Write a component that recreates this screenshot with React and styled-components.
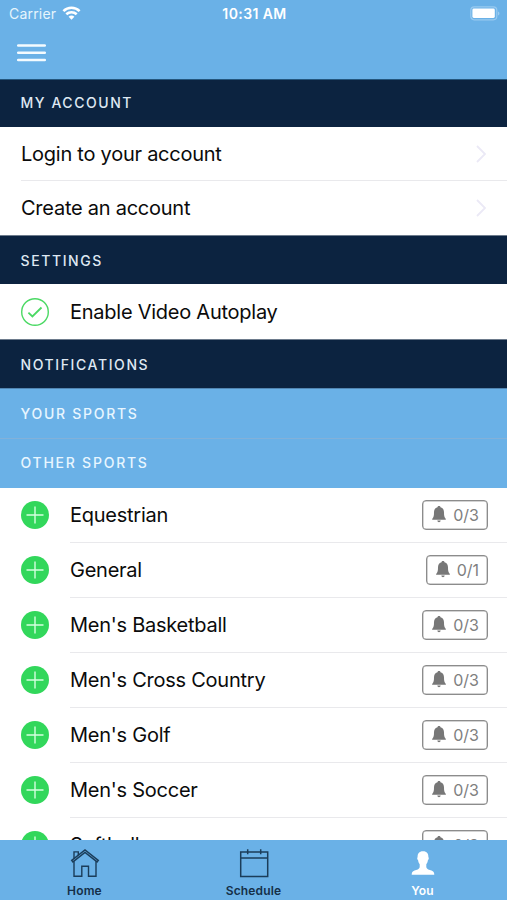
import React from 'react'
import styled, { createGlobalStyle } from 'styled-components';

const GlobalStyle = createGlobalStyle`
  body {
    margin: 0;
    background: #ffffff;
    font-family: Inter, "Liberation Sans", sans-serif;
  }
  * {
    box-sizing: border-box;
  }
`;

const Screen = styled.div`
  display: flex;
  flex-direction: column;
  width: 507px;
  height: 900px;
  overflow: hidden;
  background: #ffffff;
`;
const Header = styled.header`
  flex: none;
  height: 79px;
  background: #6ab1e7;
  color: #ffffff;
`;
const StatusBar = styled.div`
  display: grid;
  grid-template-columns: 1fr auto 1fr;
  align-items: center;
  height: 27px;
  padding: 0 7px 0 9px;
`;
const Carrier = styled.div`
  display: flex;
  align-items: center;
  gap: 6px;
  font-size: 14px;
  line-height: 27px;
  letter-spacing: 0.2px;
  color: #e6f5fc;
`;
const Clock = styled.div`
  font-size: 14px;
  font-weight: 600;
  line-height: 27px;
  letter-spacing: 0.4px;
`;
const BatteryIcon = styled.svg`
  justify-self: end;
`;
const MenuButton = styled.button`
  display: flex;
  flex-direction: column;
  margin: 17px 0 0 17px;
  padding: 0;
  border: none;
  background: none;
`;
const Content = styled.main`
  flex: 1;
  min-height: 0;
  overflow: hidden;
`;
const SectionTitle = styled.h2`
  height: ${(props) => props.$height}px;
  margin: 0;
  padding-left: 20.5px;
  border-top: 1px solid ${(props) => props.$line || 'transparent'};
  background: ${(props) => (props.$light ? '#6ab1e7' : '#0c2340')};
  color: ${(props) => (props.$light ? '#e8f6ff' : '#dfe8f2')};
  font-size: 14px;
  font-weight: 500;
  line-height: ${(props) => props.$lineHeight || props.$height - 1}px;
  letter-spacing: ${(props) => props.$spacing}px;
`;
const Row = styled.div`
  display: flex;
  align-items: center;
  height: ${(props) => props.$height}px;
  padding-left: 21px;
`;
const RowBody = styled.div`
  display: flex;
  flex: 1;
  align-items: center;
  justify-content: space-between;
  height: 100%;
  margin-left: ${(props) => (props.$inset ? 21 : 0)}px;
  padding-top: ${(props) => props.$top || 0}px;
  padding-right: 19px;
  border-bottom: ${(props) => (props.$last ? 'none' : '1px solid #e9e9ec')};
`;
const Label = styled.span`
  font-size: 20px;
  line-height: 28px;
  letter-spacing: -0.25px;
  color: #0b0b0b;
`;
const Badge = styled.div`
  display: flex;
  align-items: center;
  gap: 6px;
  height: 30px;
  padding: 0 8px;
  border: 1px solid #8c8c8c;
  border-radius: 4px;
  box-shadow: inset 0 0 0 0.5px #a8a8a8;
  color: #808080;
  font-size: 16px;
  line-height: 28px;
`;
const TabBar = styled.nav`
  display: grid;
  grid-template-columns: repeat(3, 1fr);
  flex: none;
  height: 60px;
  background: #6ab1e7;
`;
const Tab = styled.div`
  display: flex;
  flex-direction: column;
  align-items: center;
  padding-top: 8px;
  color: ${(props) => (props.$active ? '#ffffff' : '#152f48')};
`;
const TabLabel = styled.span`
  margin-top: 5px;
  font-size: 12px;
  font-weight: 600;
  line-height: 16px;
  letter-spacing: 0.15px;
`;

const WifiIcon = () => (
  <svg width="19" height="15" viewBox="0 0 19 15" fill="none" stroke="#fff" strokeWidth="2.6">
    <path d="M1.4 5.1C6 .6 13 .6 17.6 5.1" />
    <path d="M4.3 8.3c3-2.8 7.4-2.8 10.4 0" />
    <path d="M6.6 10.7c1.7-1.5 4.1-1.5 5.8 0L9.5 13.8z" fill="#fff" stroke="none" />
  </svg>
);

const Battery = () => (
  <BatteryIcon width="30" height="15" viewBox="0 0 30 15">
    <rect x="0.8" y="0.8" width="26" height="13" rx="3.5" fill="none" stroke="#98caf0" strokeWidth="1.2" />
    <rect x="2.4" y="2.6" width="22.4" height="9.4" rx="1.4" fill="#fff" />
    <path d="M28.2 5.4c1.6.8 1.6 3.2 0 4z" fill="#a6d2f3" />
  </BatteryIcon>
);

const MenuIcon = () => (
  <svg width="29" height="18" viewBox="0 0 29 18" stroke="#f4fbff" strokeWidth="2.5" strokeLinecap="round">
    <path d="M1.2 1.6h26.6M1.2 8.8h26.6M1.2 16h26.6" />
  </svg>
);

const Chevron = () => (
  <svg width="13" height="20" viewBox="0 0 13 20" fill="none" stroke="#ebe9f6" strokeWidth="1.8">
    <path d="M2 2l8 8-8 8" />
  </svg>
);

const CheckCircle = () => (
  <svg width="28" height="28" viewBox="0 0 28 28" fill="none" stroke="#4bd964">
    <circle cx="14" cy="14" r="13.3" strokeWidth="1.4" />
    <path d="M7.4 14.6l4 3.9 9.1-9" strokeWidth="1.8" />
  </svg>
);

const PlusCircle = () => (
  <svg width="28" height="28" viewBox="0 0 28 28">
    <circle cx="14" cy="14" r="14" fill="#32d75b" />
    <path d="M14 5.5v17M5.5 14h17" stroke="#d5ffdf" strokeWidth="1.4" />
  </svg>
);

const BellIcon = () => (
  <svg width="16" height="17" viewBox="0 0 16 17" fill="#777">
    <path d="M8 0c.9 0 1.4.5 1.5 1.2C12.2 2 13 4 13 6.5c0 3.3.4 5 1.5 6 .5.5.6 1.3 0 1.3H1.5c-.6 0-.5-.8 0-1.3 1.1-1 1.5-2.7 1.5-6C3 4 3.8 2 6.5 1.200 6.600.5 7.100 0 8 0z" />
    <path d="M6.3 14.6h3.4c-.2 1.100-.8 1.700-1.700 1.700s-1.500-.6-1.700-1.700z" />
  </svg>
);

const HomeIcon = () => (
  <svg width="30" height="30" viewBox="0 0 30 30" fill="none" stroke="#1b3d5a" strokeWidth="1.4">
    <path d="M1.7 12.4L15 1.9l13.3 10.5-1.2 1.5L15 4.5 2.9 13.9z" />
    <path d="M4 10.4V3.9h4.3v3.3" />
    <path d="M4 13.3v15h7.8V18.2h6.7v10.1H26V13.3" />
  </svg>
);

const CalendarIcon = () => (
  <svg width="30" height="30" viewBox="0 0 30 30" fill="none" stroke="#1b3d5a" strokeWidth="1.5">
    <path d="M1.7 3.9h27v24.6h-27zM1.7 10h27" />
    <path d="M8.7 1.3v5M21.7 1.3v5" />
  </svg>
);

const UserIcon = () => (
  <svg width="30" height="30" viewBox="0 0 30 30" fill="#fff">
    <path d="M15 3.2c4 0 5.5 2.5 5.4 6 .7.3.5 2-.5 3.1-.2 1.9-1 3.2-1.6 4v3c.5 2 3 2.6 5.2 3.3 2 .7 2.800 2 2.800 4.200H3.700c0-2.200.8-3.500 2.800-4.200 2.200-.7 4.700-1.300 5.200-3.300v-3c-.6-.8-1.400-2.100-1.600-4-1-1.100-1.200-2.800-.5-3.100-.1-3.500 1.400-6 5.400-6z" />
  </svg>
);

const accountRows = [
  { label: 'Login to your account', last: false, top: 1 },
  { label: 'Create an account', last: true, top: 0 },
];

const sports = [
  { name: 'Equestrian', count: '0/3' },
  { name: 'General', count: '0/1' },
  { name: "Men's Basketball", count: '0/3' },
  { name: "Men's Cross Country", count: '0/3' },
  { name: "Men's Golf", count: '0/3' },
  { name: "Men's Soccer", count: '0/3' },
  { name: 'Softball', count: '0/3' },
];

const SportRow = ({ sport }) => (
  <Row $height={55}>
    <PlusCircle />
    <RowBody $inset>
      <Label>{sport.name}</Label>
      <Badge>
        <BellIcon />
        {sport.count}
      </Badge>
    </RowBody>
  </Row>
);

const App = () => {
  return (
    <Screen>
      <GlobalStyle />
      <Header>
        <StatusBar>
          <Carrier>
            Carrier
            <WifiIcon />
          </Carrier>
          <Clock>10:31 AM</Clock>
          <Battery />
        </StatusBar>
        <MenuButton aria-label="Menu">
          <MenuIcon />
        </MenuButton>
      </Header>
      <Content>
        <SectionTitle $height={48} $lineHeight={46} $spacing={1.55} $line="#24567d">MY ACCOUNT</SectionTitle>
        {accountRows.map((row) => (
          <Row key={row.label} $height={54}>
            <RowBody $last={row.last} $top={row.top}>
              <Label>{row.label}</Label>
              <Chevron />
            </RowBody>
          </Row>
        ))}
        <SectionTitle $height={49} $lineHeight={49} $spacing={1.6} $line="#6d7b8c">SETTINGS</SectionTitle>
        <Row $height={55}>
          <CheckCircle />
          <RowBody $inset $last $top={1}>
            <Label>Enable Video Autoplay</Label>
          </RowBody>
        </Row>
        <SectionTitle $height={49} $lineHeight={49} $spacing={1.6} $line="#6d7b8c">NOTIFICATIONS</SectionTitle>
        <SectionTitle $height={50} $spacing={1.72} $light $line="#5286b3">YOUR SPORTS</SectionTitle>
        <SectionTitle $height={49.5} $spacing={1.75} $light $line="#82b1d9">OTHER SPORTS</SectionTitle>
        {sports.map((sport) => (
          <SportRow key={sport.name} sport={sport} />
        ))}
      </Content>
      <TabBar>
        <Tab>
          <HomeIcon />
          <TabLabel>Home</TabLabel>
        </Tab>
        <Tab>
          <CalendarIcon />
          <TabLabel>Schedule</TabLabel>
        </Tab>
        <Tab $active>
          <UserIcon />
          <TabLabel>You</TabLabel>
        </Tab>
      </TabBar>
    </Screen>
  );
}
export default App
